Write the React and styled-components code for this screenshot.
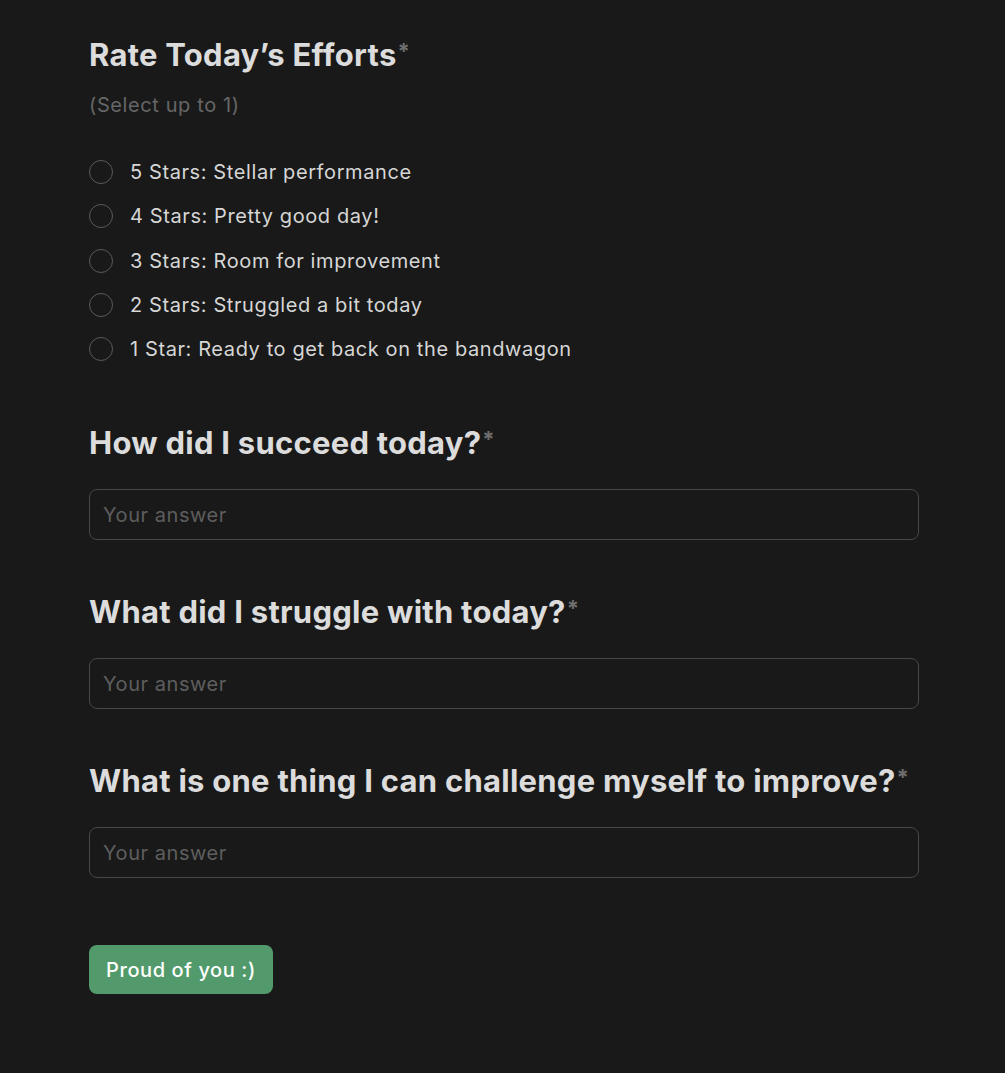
import React, { useState } from 'react';
import styled, { createGlobalStyle } from 'styled-components';

const GlobalStyle = createGlobalStyle`
  html, body {
    margin: 0;
    padding: 0;
    background: #191919;
  }
  body {
    font-family: Inter, "Noto Sans", sans-serif;
    -webkit-font-smoothing: antialiased;
  }
`

const Page = styled.div`
  min-height: 1073px;
  background: #191919;
  padding: 36px 0 60px 89px;
  box-sizing: border-box;
`

const Form = styled.form`
  width: 830px;
  display: flex;
  flex-direction: column;
`

const Title = styled.h2`
  margin: ${p => (p.first ? '0' : '53px')} 0 0;
  font-size: 31px;
  line-height: 38px;
  font-weight: 700;
  color: #dcdcdc;
  letter-spacing: 0.25px;
  white-space: nowrap;
`

const Required = styled.span`
  color: #6e6e6e;
  font-size: 22px;
  vertical-align: top;
  position: relative;
  top: -4px;
  margin-left: 1px;
`

const Hint = styled.div`
  margin-top: 17px;
  font-size: 20px;
  line-height: 28px;
  color: #666666;
  letter-spacing: 0.6px;
`

const Options = styled.div`
  margin-top: 31px;
  display: flex;
  flex-direction: column;
`

const Option = styled.label`
  height: 44.3px;
  display: flex;
  align-items: center;
  gap: 17px;
  cursor: pointer;
  font-size: 20px;
  color: #d6d6d6;
  letter-spacing: 0.6px;
`

const Radio = styled.span`
  width: 24px;
  height: 24px;
  border-radius: 50%;
  box-sizing: border-box;
  border: 1.5px solid ${p => (p.checked ? '#529a6b' : '#5a5a5a')};
  background: ${p => (p.checked ? '#529a6b' : 'transparent')};
  flex-shrink: 0;
`

const Input = styled.input`
  margin-top: 27px;
  height: 51px;
  box-sizing: border-box;
  width: 100%;
  background: transparent;
  border: 1.5px solid #474747;
  border-radius: 8px;
  padding: 0 13px;
  font-family: inherit;
  font-size: 20px;
  letter-spacing: 0.55px;
  color: #dcdcdc;
  outline: none;

  &::placeholder {
    color: #5e5e5e;
  }
`

const Submit = styled.button`
  margin-top: 67px;
  align-self: flex-start;
  height: 49px;
  padding: 0 17px;
  border: none;
  border-radius: 8px;
  background: #529a6b;
  color: #ffffff;
  font-family: inherit;
  font-size: 20px;
  font-weight: 500;
  letter-spacing: 0.6px;
  cursor: pointer;
`

const ratings = [
  '5 Stars: Stellar performance',
  '4 Stars: Pretty good day!',
  '3 Stars: Room for improvement',
  '2 Stars: Struggled a bit today',
  '1 Star: Ready to get back on the bandwagon'
]

const questions = [
  'How did I succeed today?',
  'What did I struggle with today?',
  'What is one thing I can challenge myself to improve?'
]

export default function App() {
  const [rating, setRating] = useState(null);

  return (
    <Page>
      <GlobalStyle />
      <Form onSubmit={e => e.preventDefault()}>
        <Title first>
          Rate Today’s Efforts<Required>*</Required>
        </Title>
        <Hint>(Select up to 1)</Hint>
        <Options>
          {ratings.map((r, i) => (
            <Option key={r} onClick={() => setRating(i)}>
              <Radio checked={rating === i} />
              {r}
            </Option>
          ))}
        </Options>

        {questions.map(q => (
          <React.Fragment key={q}>
            <Title>
              {q}<Required>*</Required>
            </Title>
            <Input placeholder="Your answer" />
          </React.Fragment>
        ))}

        <Submit type="submit">Proud of you :)</Submit>
      </Form>
    </Page>
  )
}
